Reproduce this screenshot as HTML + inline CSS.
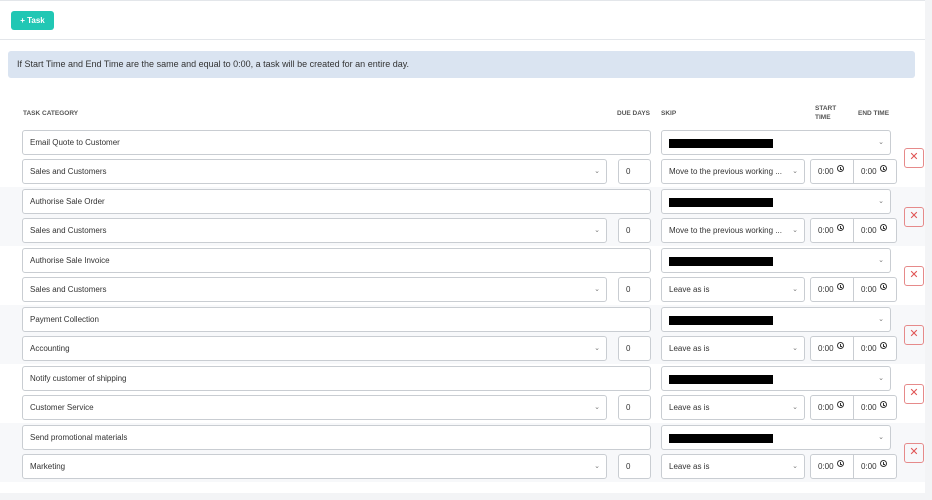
<!DOCTYPE html>
<html><head><style>
*{box-sizing:border-box;margin:0;padding:0}
body{width:932px;height:500px;background:#f3f4f6;font-family:"Liberation Sans",sans-serif;font-size:8px;color:#333;position:relative;overflow:hidden}
.main{position:absolute;left:0;top:0;width:925px;height:493px;background:#fff;border-top:1px solid #e3e6ea}
.btn{position:absolute;left:11px;top:10px;width:43px;height:19px;background:#21c7b4;border-radius:3px;color:#fff;font-weight:bold;font-size:8px;line-height:19px;text-align:center}
.hl{position:absolute;left:0;width:925px;height:1px;background:#e3e6ea}
.alert{position:absolute;left:8px;top:50px;width:907px;height:27px;background:#dae4f1;border-radius:3px;font-size:9px;line-height:27px;padding-left:9px;color:#333}
.th{position:absolute;font-size:6.5px;font-weight:bold;color:#555;line-height:9px}
.row{position:absolute;left:0;width:925px;height:59px}
.in{position:absolute;height:25px;border:1px solid #c9cdd2;border-radius:3px;background:#fff;font-size:8px;line-height:23px;padding-left:7px;color:#333}
.car{position:absolute;right:6px;top:0;font-size:7px;color:#777}
.blk{position:absolute;left:7px;top:8px;width:104px;height:9px;background:#000}
.x{position:absolute;left:904px;width:20px;height:20px;border:1px solid #e68a8a;border-radius:3px;color:#e05555;font-size:11px;line-height:17px;text-align:center}
.clk{display:inline-block;width:7px;height:7px;border:1px solid #333;border-radius:50%;position:relative;top:-2px;margin-left:3px}
.clk:after{content:"";position:absolute;left:2px;top:0.5px;width:1.5px;height:2.5px;border-left:1px solid #333;border-bottom:1px solid #333}
</style></head><body>
<div class="main">
<div class="btn">+ Task</div>
<div class="hl" style="top:38px"></div>
<div class="alert">If Start Time and End Time are the same and equal to 0:00, a task will be created for an entire day.</div>
<div class="th" style="left:23px;top:108px">TASK CATEGORY</div>
<div class="th" style="left:617px;top:108px">DUE DAYS</div>
<div class="th" style="left:661px;top:108px">SKIP</div>
<div class="th" style="left:815px;top:103px">START<br>TIME</div>
<div class="th" style="left:858px;top:108px">END TIME</div>
<div class="hl" style="top:127px;background:#d5d8dc"></div>
</div>
<div id="rows"></div>
<script>
var d=[["Email Quote to Customer","Sales and Customers","Move to the previous working ..."],["Authorise Sale Order","Sales and Customers","Move to the previous working ..."],["Authorise Sale Invoice","Sales and Customers","Leave as is"],["Payment Collection","Accounting","Leave as is"],["Notify customer of shipping","Customer Service","Leave as is"],["Send promotional materials","Marketing","Leave as is"]];
var h="";
d.forEach(function(r,i){var t=128+i*59;
h+='<div class="row" style="top:'+t+'px;background:'+(i%2?'#f7f8fa':'#fff')+'">'+
'<div class="in" style="left:22px;top:2px;width:629px">'+r[0]+'</div>'+
'<div class="in" style="left:661px;top:2px;width:230px"><div class="blk"></div><span class="car">&#8964;</span></div>'+
'<div class="in" style="left:22px;top:31px;width:585px">'+r[1]+'<span class="car">&#8964;</span></div>'+
'<div class="in" style="left:618px;top:31px;width:33px">0</div>'+
'<div class="in" style="left:661px;top:31px;width:144px">'+r[2]+'<span class="car">&#8964;</span></div>'+
'<div class="in" style="left:810px;top:31px;width:44px;border-radius:3px 0 0 3px">0:00<span class="clk"></span></div>'+
'<div class="in" style="left:853px;top:31px;width:44px;border-radius:0 3px 3px 0">0:00<span class="clk"></span></div>'+
'<div class="x" style="top:20px">&#10005;</div></div>';});
document.getElementById("rows").innerHTML=h;
</script>
</body></html>
